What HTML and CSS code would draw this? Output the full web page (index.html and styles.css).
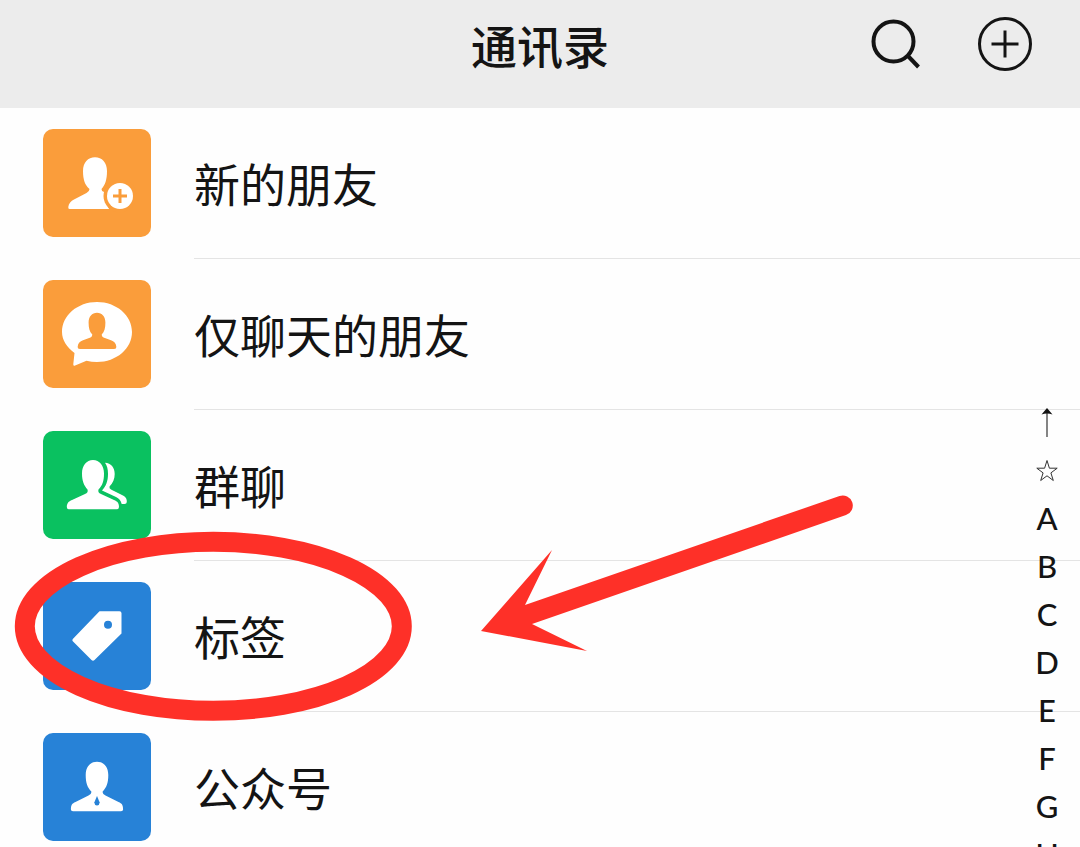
FILE: index.html
```html
<!DOCTYPE html>
<html lang="zh-CN">
<head>
<meta charset="utf-8">
<meta name="viewport" content="width=device-width, initial-scale=1">
<title>通讯录</title>
<link rel="stylesheet" href="styles.css">
</head>
<body>
<div class="screen">
  <header class="topbar">
    <h1 class="title">通讯录</h1>
    <div class="actions">
      <button class="action" type="button" aria-label="搜索">
        <svg viewBox="0 0 56 56" fill="none" stroke="#141414"><circle cx="24.500" cy="25.500" r="20" stroke-width="4"/><path d="M38.500 39.500 49.500 51" stroke-width="4"/></svg>
      </button>
      <button class="action" type="button" aria-label="添加">
        <svg viewBox="0 0 56 56" fill="none" stroke="#141414" stroke-width="3"><circle cx="28" cy="28" r="25.500"/><path d="M28 14.500V41.500M14.500 28H41.500"/></svg>
      </button>
    </div>
  </header>
  <main class="content">
    <nav class="list" aria-label="通讯录">
      <a class="row" href="#new">
        <svg class="tile orange" viewBox="0 0 108 108"><path fill="#fff" d="M26.500 80Q25 80 25.300 78C25.700 74.500 28 72 31 70.500L43.500 64Q46.500 62.500 46.500 60C42 56 40 51 40 42C40 33.500 45 28.300 52 28.300S64 33.500 64 42C64 51 62 56 58.500 60Q58.500 62.500 61 63L66 80Z"/><circle class="ring" cx="77" cy="67" r="16.500"/><circle cx="77" cy="67" r="13" fill="#fff"/><path class="mark" d="M77 60V74M70 67H84"/></svg>
        <span class="label">新的朋友</span>
      </a>
      <a class="row" href="#chat-only">
        <svg class="tile orange" viewBox="0 0 108 108"><path fill="#fff" d="M54 22C73.500 22 89 35.500 89 52S73.500 82 54 82Q48.500 82 43.500 80.700L31.500 85.700Q30 86 30.300 84L31.500 73C24 67.500 19 60 19 52C19 35.500 34.500 22 54 22Z"/><path class="ring" d="M37 69Q34.500 69 34.700 66.500C35 63 37 61.500 40 60.300L47.500 57.500Q49.500 56.500 49.300 54.500C46.500 51.500 45.600 48 45.600 42.500C45.600 36.500 49 32.700 54 32.700S62.400 36.500 62.400 42.500C62.400 48 61.500 51.500 58.700 54.500Q58.500 56.500 60.500 57.500L68 60.300C71 61.500 73 63 73.300 66.500Q73.500 69 71 69Z"/></svg>
        <span class="label">仅聊天的朋友</span>
      </a>
      <a class="row" href="#groups">
        <svg class="tile green" viewBox="0 0 108 108" fill="#fff"><path d="M26 78.300Q23.700 78.300 23.800 76C24 72 25.500 70.500 29 69L42 63Q45.500 61.500 44.500 58.500C41 54.500 39 50 39 42.500C39 34.500 43.500 29 50 29S61 34.500 61 42.500C61 50 59.500 54.500 55.500 58.500Q54.500 61.500 58 63L71 69C74.500 70.500 76 72 76 76Q76 78.300 73.700 78.300Z"/><path d="M62 31.700C68 32 71.700 36.500 71.700 43C71.700 48 70 52 66.500 55.500Q66 57.500 68 58.500L80 64.500C83 66 84 68 83.800 71Q83.700 73 81.500 73H78.700C78 69.500 76 67.500 73 66L59 59.500C63 55 65 50 65 43C65 38 64 34.500 62 31.700Z"/></svg>
        <span class="label">群聊</span>
      </a>
      <a class="row" href="#tags">
        <svg class="tile blue" viewBox="0 0 108 108"><path fill="#fff" fill-rule="evenodd" d="M56.500 29.300H76.500Q78.500 29.300 78.500 31.300V51.500L51.500 78Q50 79.300 48.500 78L29.800 59.200Q28.800 58 29.800 56.900ZM65 38.700A4 4 0 1 0 65 46.700 4 4 0 1 0 65 38.700Z"/></svg>
        <span class="label">标签</span>
      </a>
      <a class="row" href="#official">
        <svg class="tile blue" viewBox="0 0 108 108"><path fill="#fff" d="M30 78.300Q27.700 78.300 27.900 76C28 72 29 70.500 32.500 69L45.500 62.500Q48.800 61 48.300 58.500C44.500 54.500 42.700 50 42.700 42C42.700 34 47 28.800 54 28.800S65.300 34 65.300 42C65.300 50 63.500 54.500 59.700 58.500Q59.200 61 62.500 62.500L75.500 69C79 70.500 80 72 80.100 76Q80.300 78.300 78 78.300Z"/><path class="ring" d="M54 63L56.700 69.500Q56.500 72.300 54 72.500 51.500 72.300 51.300 69.500Z"/></svg>
        <span class="label">公众号</span>
      </a>
    </nav>
    <nav class="index" aria-label="字母索引">
      <a class="key" href="#top" aria-label="顶部"><svg class="glyph" viewBox="0 -2 30 32"><path d="M15 2V29" stroke="#333" stroke-width="1.200"/><path d="M15 0 20.500 6.500Q15 4.500 9.500 6.500Z" fill="#141414"/></svg></a>
      <a class="key" href="#starred" aria-label="星标"><svg class="glyph" viewBox="0 -2 30 32"><path d="M15 4.500 17.400 12.200H25.200L18.900 16.900 21.300 24.500 15 19.800 8.700 24.500 11.100 16.900 4.800 12.200H12.600Z" fill="none" stroke="#333" stroke-width="1"/></svg></a>
      <a class="key" href="#A">A</a>
      <a class="key" href="#B">B</a>
      <a class="key" href="#C">C</a>
      <a class="key" href="#D">D</a>
      <a class="key" href="#E">E</a>
      <a class="key" href="#F">F</a>
      <a class="key" href="#G">G</a>
      <a class="key" href="#H">H</a>
    </nav>
  </main>
  <svg class="annotation" viewBox="0 0 860 740" aria-hidden="true"><ellipse cx="213.300" cy="626.300" rx="188.500" ry="84.500" fill="none" stroke="#fe3028" stroke-width="20"/><path fill="#fe3028" d="M481 631 552 550 525 605 839.500 496A10 10 0 0 1 846 515L532 624 587 651Z"/></svg>
</div>
</body>
</html>
```

FILE: styles.css
```css
* {
  box-sizing: border-box;
}

body {
  margin: 0;
  background: #fefefe;
  color: #141414;
  font-family: "Noto Sans CJK SC", sans-serif;
}

.screen {
  position: relative;
  display: flex;
  flex-direction: column;
  height: 100vh;
  overflow: hidden;
}

.topbar {
  flex: none;
  display: grid;
  grid-template-columns: 1fr auto 1fr;
  align-items: center;
  padding: 10px 47px 30px;
  background: #ececec;
}

.title {
  grid-column: 2;
  margin: 0;
  font-size: 46px;
  font-weight: 500;
  line-height: 68px;
}

.actions {
  display: flex;
  justify-content: flex-end;
  gap: 52px;
}

.action {
  width: 56px;
  height: 56px;
  padding: 0;
  border: 0;
  background: none;
}

.action svg {
  display: block;
}

.content {
  position: relative;
  flex: 1;
  min-height: 0;
}

.row {
  display: flex;
  align-items: center;
  gap: 43px;
  padding-left: 43px;
  color: inherit;
  text-decoration: none;
}

.tile {
  flex: none;
  width: 108px;
  height: 108px;
  margin-bottom: 1px;
  border-radius: 10px;
  background: var(--tile);
}

.orange {
  --tile: #fa9d3b;
}

.green {
  --tile: #0ac160;
}

.blue {
  --tile: #2782d7;
}

.ring {
  fill: var(--tile);
}

.mark {
  fill: none;
  stroke: var(--tile);
  stroke-width: 3;
}

.label {
  flex: 1;
  padding-bottom: 2px;
  border-bottom: 1px solid #e4e4e4;
  font-size: 46px;
  line-height: 148px;
}

.index {
  position: absolute;
  top: 291px;
  right: 8px;
  bottom: 0;
  width: 50px;
  overflow: hidden;
}

.key {
  display: flex;
  align-items: center;
  justify-content: center;
  height: 48px;
  padding-bottom: 2px;
  color: inherit;
  font-family: Lato, sans-serif;
  font-size: 31px;
  font-weight: 500;
  text-decoration: none;
}

.glyph {
  width: 30px;
  height: 32px;
}

.annotation {
  position: absolute;
  top: 0;
  left: 0;
  width: 860px;
  height: 740px;
  pointer-events: none;
}
```
